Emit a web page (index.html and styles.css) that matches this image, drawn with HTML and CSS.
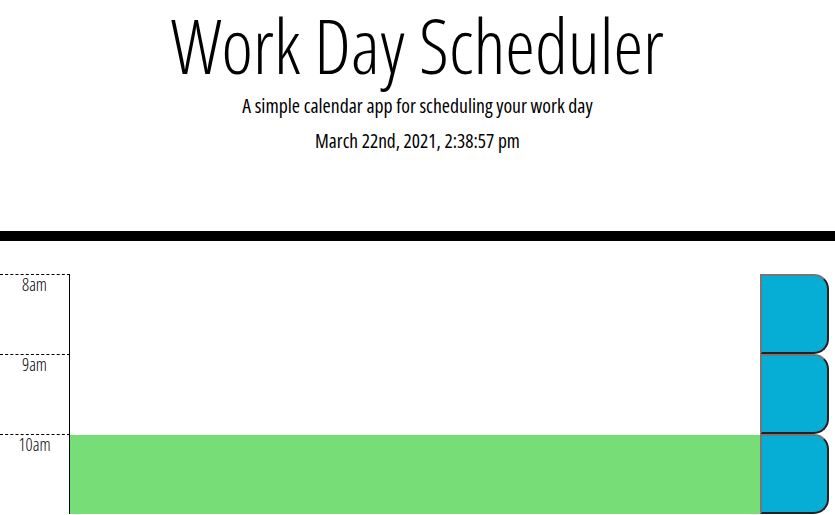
FILE: index.html
```html
<!DOCTYPE html>
<html lang="en">
<head>
<meta charset="utf-8">
<title>Work Day Scheduler</title>
<link rel="stylesheet" href="styles.css">
</head>
<body>
<header class="jumbotron">
  <h1 class="title">Work Day Scheduler</h1>
  <p class="lead">A simple calendar app for scheduling your work day</p>
  <p class="lead date">March 22nd, 2021, 2:38:57 pm</p>
</header>
<main class="schedule">
  <div class="row">
    <div class="hour">8am</div>
    <textarea class="description"></textarea>
    <button class="save-btn" aria-label="Save"></button>
  </div>
  <div class="row">
    <div class="hour">9am</div>
    <textarea class="description"></textarea>
    <button class="save-btn" aria-label="Save"></button>
  </div>
  <div class="row">
    <div class="hour">10am</div>
    <textarea class="description future"></textarea>
    <button class="save-btn" aria-label="Save"></button>
  </div>
</main>
</body>
</html>
```
FILE: styles.css
```css
html, body {
  margin: 0;
  padding: 0;
  background: #ffffff;
}
body {
  font-family: "Open Sans", "Liberation Sans", sans-serif;
  font-stretch: 75%;
  color: #000;
}
.jumbotron {
  text-align: center;
  border-bottom: 10px solid #000;
  padding: 0 16px;
  height: 241px;
  box-sizing: border-box;
  margin-bottom: 33px;
}
.title {
  margin: 0;
  font-size: 75px;
  font-weight: 300;
  line-height: 90px;
}
.lead {
  margin: 2px 0 0;
  font-size: 19.75px;
  font-weight: 400;
  line-height: 1.4;
}
.date {
  margin-top: 7px;
  font-size: 19.4px;
}
.schedule {
  display: flex;
  flex-direction: column;
  padding-right: 6px;
}
.row {
  display: flex;
  height: 80px;
}
.hour {
  width: 70px;
  border-top: 1px dashed #000;
  border-right: 1px solid #000;
  text-align: center;
  font-size: 17.5px;
  font-weight: 300;
  line-height: 1;
  padding-top: 1px;
  box-sizing: border-box;
  flex: none;
}
.description {
  flex: 1;
  margin: 0;
  border: none;
  border-top: 1px solid #fff;
  resize: none;
  background: transparent;
  padding: 10px;
  font-family: inherit;
}
.future {
  background: #77dd77;
}
.save-btn {
  width: 69px;
  flex: none;
  margin: 0;
  padding: 0;
  background: #06aed5;
  border: 2px outset #767676;
  border-top-right-radius: 15px;
  border-bottom-right-radius: 15px;
}
```
